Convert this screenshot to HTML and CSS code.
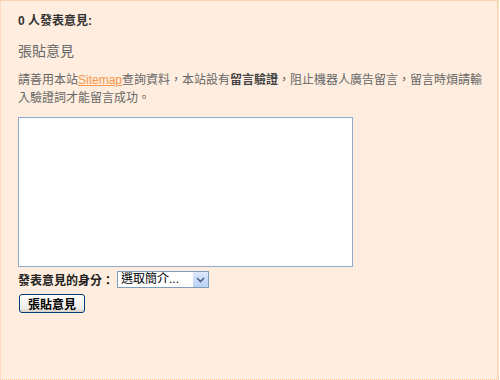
FILE: index.html
```html
<!DOCTYPE html>
<html lang="zh-Hant">
<head>
  <meta charset="UTF-8">
  <title>張貼意見</title>
  <link rel="stylesheet" href="styles.css">
</head>
<body>

  <div class="comments">
    <h4 class="count">0 人發表意見:</h4>

    <h3 class="post-title">張貼意見</h3>

    <p class="notice">請善用本站<a href="#">Sitemap</a>查詢資料，本站設有<b>留言驗證</b><span>，阻止機器人廣告留言，留言時煩請輸</span><span>入驗證詞才能留言成功。</span></p>

    <textarea class="comment-box"></textarea>

    <div class="identity">
      <label for="profile">發表意見的身分：</label>
      <span class="select-wrap">
        <select id="profile">
          <option>選取簡介...</option>
        </select>
        <span class="select-arrow">
          <svg width="9" height="6" viewBox="0 0 9 6"><path d="M1 1 L4.5 4.5 L8 1" fill="none" stroke="#4d6185" stroke-width="1.6"/></svg>
        </span>
      </span>
    </div>

    <button class="post-btn">張貼意見</button>
  </div>

</body>
</html>
```

FILE: styles.css
```css
    body {
      margin: 0;
      padding: 0;
      font-family: "Liberation Sans", "Noto Sans CJK TC", sans-serif;
      background-color: #ffffff;
    }
    .comments {
      box-sizing: border-box;
      width: 499px;
      height: 380px;
      background-color: #ffeedf;
      border-top: 1px solid #fcd2ac;
      border-left: 1px solid #fcd9c0;
      border-right: 2px solid #fcd7b8;
      border-bottom: 1px dotted #fcc89c;
      padding: 13px 0 0 17px;
      color: #666666;
    }
    .count {
      margin: 0;
      font-size: 12px;
      line-height: 14px;
      color: #333333;
    }
    .post-title {
      margin: 15px 0 0;
      font-size: 14px;
      line-height: 16px;
      font-weight: normal;
      color: #666666;
    }
    .notice {
      margin: 13px 0 0;
      font-size: 12px;
      line-height: 17.5px;
      width: 470px;
    }
    .notice a {
      color: #f7944a;
      text-decoration: underline;
    }
    .notice b {
      color: #444444;
    }
    .comment-box {
      display: block;
      box-sizing: border-box;
      width: 335px;
      height: 150px;
      margin-top: 10px;
      border: 1px solid #95aac8;
      border-top-color: #8fa8c8;
      background: #ffffff;
      resize: none;
    }
    .identity {
      display: flex;
      align-items: center;
      margin-top: 4px;
    }
    .identity label {
      font-size: 12px;
      font-weight: bold;
      color: #222222;
    }
    .select-wrap {
      position: relative;
      display: inline-block;
      margin-left: 3px;
      height: 17px;
    }
    .select-wrap select {
      appearance: none;
      display: block;
      box-sizing: border-box;
      width: 92px;
      height: 17px;
      padding: 0 0 0 3px;
      border: 1px solid #7f9db9;
      border-radius: 0;
      background: #ffffff;
      font-family: "Liberation Sans", "Noto Sans CJK TC", sans-serif;
      font-size: 12px;
      line-height: 15px;
      color: #000000;
    }
    .select-arrow {
      position: absolute;
      top: 1px;
      right: 1px;
      width: 15px;
      height: 15px;
      background: linear-gradient(#dce8fd, #b9d0f7);
      border-radius: 1px;
      display: flex;
      align-items: center;
      justify-content: center;
      pointer-events: none;
    }
    .post-btn {
      display: block;
      margin-top: 6px;
      margin-left: 1px;
      padding: 0 8px;
      height: 19px;
      font-family: "Liberation Sans", "Noto Sans CJK TC", sans-serif;
      font-size: 12px;
      font-weight: bold;
      color: #000000;
      background: linear-gradient(#ffffff, #ecebe6 80%, #d6d0c5);
      border: 1px solid #003c74;
      border-radius: 3px;
    }
```
